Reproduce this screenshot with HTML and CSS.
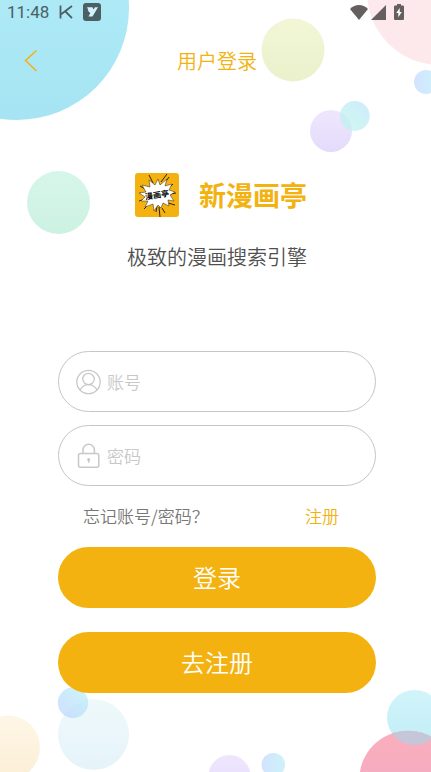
FILE: index.html
```html
<!DOCTYPE html>
<html lang="zh-CN">
<head>
<meta charset="utf-8">
<meta name="viewport" content="width=device-width, initial-scale=1">
<title>用户登录</title>
<link rel="stylesheet" href="styles.css">
</head>
<body>
<svg class="bubbles bubbles-top" viewBox="0 0 431 240" aria-hidden="true">
  <defs>
    <linearGradient id="sky" x2="0" y2="1"><stop stop-color="#b2eef8"/><stop offset="1" stop-color="#a7e4f3"/></linearGradient>
    <linearGradient id="lime" x2="0" y2="1"><stop stop-color="#f2f6d6"/><stop offset="1" stop-color="#eaf1cc"/></linearGradient>
    <linearGradient id="lilac" x2="0" y2="1"><stop stop-color="#efe6fd"/><stop offset="1" stop-color="#e4dbfc"/></linearGradient>
    <linearGradient id="mint" x2="0" y2="1"><stop stop-color="#d7f6eb"/><stop offset="1" stop-color="#ccf1e2"/></linearGradient>
    <linearGradient id="aqua" x1="0" y1="1" x2="1" y2="0"><stop stop-color="#bdf7ea"/><stop offset="1" stop-color="#b8e2fa"/></linearGradient>
    <linearGradient id="azure" x1="0" y1="0" x2="1" y2="0"><stop stop-color="#d2e3ff"/><stop offset="1" stop-color="#cdf2f9"/></linearGradient>
  </defs>
  <circle cx="17" cy="8" r="112" fill="url(#sky)"/>
  <circle cx="293" cy="50" r="31.5" fill="url(#lime)"/>
  <circle cx="440" cy="-8" r="73" fill="#fde9eb"/>
  <circle cx="426" cy="82" r="12" fill="url(#azure)"/>
  <circle cx="331" cy="131" r="21" fill="url(#lilac)"/>
  <circle cx="354.7" cy="116" r="15" fill="url(#aqua)" opacity=".7"/>
  <circle cx="58.5" cy="202.5" r="31.5" fill="url(#mint)"/>
</svg>
<svg class="bubbles bubbles-bottom" viewBox="0 0 431 92" aria-hidden="true">
  <defs>
    <linearGradient id="mist" x2="0" y2="1"><stop stop-color="#eff9fa"/><stop offset="1" stop-color="#e5f3fa"/></linearGradient>
    <linearGradient id="cream" x2="0" y2="1"><stop stop-color="#fef6e6"/><stop offset="1" stop-color="#fbeed6"/></linearGradient>
    <linearGradient id="rose" x2="0" y2="1"><stop stop-color="#f9afbc"/><stop offset="1" stop-color="#f3a8c6"/></linearGradient>
    <linearGradient id="ice" x2="0" y2="1"><stop stop-color="#d1f4fa"/><stop offset="1" stop-color="#c2edf6"/></linearGradient>
    <linearGradient id="drop" x1="0" y1="1" x2="1" y2="0"><stop stop-color="#bcd0ff"/><stop offset="1" stop-color="#b4f2f6"/></linearGradient>
  </defs>
  <circle cx="93.5" cy="54.5" r="35.5" fill="url(#mist)"/>
  <circle cx="73" cy="22.7" r="15.2" fill="url(#drop)" opacity=".7"/>
  <circle cx="8" cy="67.5" r="32" fill="url(#cream)"/>
  <circle cx="229.5" cy="96" r="21" fill="url(#lilac)"/>
  <circle cx="273.3" cy="84.7" r="11.8" fill="url(#azure)"/>
  <circle cx="414.5" cy="37.5" r="27.5" fill="url(#ice)"/>
  <circle cx="408" cy="99.5" r="48.7" fill="url(#rose)"/>
  <clipPath id="overlap"><circle cx="408" cy="99.5" r="48.7"/></clipPath>
  <circle cx="414.5" cy="37.5" r="27.5" fill="#c5c7d9" clip-path="url(#overlap)"/>
</svg>

<div class="status">
  <div class="status-group">
    <span class="clock">11:48</span>
    <svg width="14" height="14" viewBox="0 0 14 14" fill="none" stroke="currentColor" stroke-width="1.800" aria-hidden="true"><path d="M1.500 .5v13M13 1 1.800 9.500M6.500 6.500 13 13.200"/></svg>
    <svg width="18" height="18" viewBox="0 0 18 18" aria-hidden="true"><rect width="18" height="18" rx="3" fill="currentColor"/><path d="M4 4.300h5.500L10.500 6.500l1.500-2.200h3L9.500 13.500H5.500L7.300 10 4.500 7.500h1z" fill="#d4f3f8"/></svg>
  </div>
  <div class="status-group status-right">
    <svg width="18" height="15" viewBox="0 0 18 15" aria-hidden="true"><path d="M0 4C5-1.200 13-1.200 18 4L9 15z" fill="currentColor"/></svg>
    <svg width="15" height="15" viewBox="0 0 15 15" aria-hidden="true"><path d="M15 0v15H0z" fill="currentColor"/></svg>
    <svg class="battery" width="10" height="16" viewBox="0 0 10 16" aria-hidden="true"><path d="M3 0h4v1.500h2q1 0 1 1V15q0 1-1 1H1q-1 0-1-1V2.500q0-1 1-1h2z" fill="currentColor"/><path d="M5.700 4 2.200 9h2.100v4.300L7.800 8H5.700z" fill="#fff"/></svg>
  </div>
</div>

<header class="nav">
  <button class="back" type="button" aria-label="返回">
    <svg width="14" height="22" viewBox="0 0 14 22" fill="none" stroke="currentColor" stroke-width="1.500" aria-hidden="true"><path d="M12.500 .5 1.500 10.500 12.500 21"/></svg>
  </button>
  <h1 class="title">用户登录</h1>
</header>

<main class="page">
  <div class="brand">
    <svg class="logo" width="44" height="44" viewBox="0 0 44 44" aria-hidden="true">
      <rect width="44" height="44" rx="3" fill="#f3b210"/>
      <path stroke="#30230c" fill="none" d="M14 2l4 8M26 9l6-8M29 11l5-7M5 13l7 4M38 11l-5 5M4 28l6-2M9 36l5-5M33 30l7 2M27 35l3 5M22 33l-1 6M24 34l1 10M5 20l5 2M36 21l5-1"/>
      <path d="M14 7 20 12 23 6 25 12 32 6 30 13 37 11 34 17 40 19 35 22 39 28 33 27 34 33 28 30 26 35 23 32 19 38 18 31 10 34 13 28 6 28 10 24 4 20 11 19 7 12 15 14z" fill="#fff" stroke="#2c2417" stroke-width=".5"/>
      <text class="logo-text" x="10" y="25" transform="rotate(-9 22 22)">漫画亭</text>
    </svg>
    <h2 class="name">新漫画亭</h2>
  </div>
  <p class="slogan">极致的漫画搜索引擎</p>

  <form class="form">
    <label class="field">
      <svg width="26" height="26" viewBox="0 0 26 26" fill="none" stroke="currentColor" stroke-width="1.300" aria-hidden="true"><circle cx="13.500" cy="13" r="11.700"/><circle cx="13.500" cy="10" r="5.700"/><path d="M5 21c2-3.500 5-5.300 8.500-5.300s6.500 1.800 8.500 5.300"/></svg>
      <input class="input" type="text" placeholder="账号" aria-label="账号">
    </label>
    <label class="field">
      <svg width="26" height="26" viewBox="0 0 26 26" fill="none" stroke="currentColor" stroke-width="1.500" aria-hidden="true"><rect x="3.500" y="10.500" width="20.300" height="13.700" rx="2"/><path d="M8 10.500V7a5.700 5.700 0 0 1 11.400 0v3.500"/><circle cx="13.700" cy="16.500" r="1.500" fill="currentColor" stroke="none"/><path d="M13.700 16.500v3.200"/></svg>
      <input class="input" type="password" placeholder="密码" aria-label="密码">
    </label>
    <div class="links">
      <a class="forgot" href="#forgot">忘记账号/密码？</a>
      <a class="register" href="#register">注册</a>
    </div>
    <button class="button" type="submit">登录</button>
    <button class="button" type="button">去注册</button>
  </form>
</main>
</body>
</html>
```
FILE: styles.css
```css
* {
  box-sizing: border-box;
}

body {
  position: relative;
  min-height: 100vh;
  margin: 0;
  overflow-x: hidden;
  background: #fff;
  color: #505050;
  font-family: "Noto Sans CJK SC", sans-serif;
  font-weight: 350;
}

svg {
  display: block;
  flex: none;
}

.bubbles {
  position: absolute;
  left: 0;
  z-index: -1;
  width: 100%;
}

.bubbles-top {
  top: 0;
}

.bubbles-bottom {
  bottom: 0;
}

.status {
  display: flex;
  justify-content: space-between;
  height: 24px;
  padding: 0 27px 0 7px;
  color: #4a6064;
}

.status-group {
  display: flex;
  align-items: center;
  gap: 10px;
}

.status-right {
  gap: 3px;
  color: #665f60;
}

.battery {
  margin-left: 5px;
}

.clock {
  font: 17px/24px Roboto, sans-serif;
}

.nav {
  display: grid;
  grid-template-columns: 46px 1fr 43px;
  align-items: center;
  height: 73px;
  color: #f3b210;
}

.back {
  display: flex;
  justify-content: flex-end;
  padding: 8px;
  border: 0;
  background: none;
  color: inherit;
}

.title {
  margin: 0;
  font-size: 20px;
  font-weight: 350;
  line-height: 28px;
  text-align: center;
}

.page {
  padding: 76px 55px 0 58px;
}

.brand {
  display: flex;
  align-items: center;
  justify-content: center;
  gap: 20px;
  height: 44px;
  padding-left: 8px;
}

.logo-text {
  font-size: 8px;
  font-weight: 700;
}

.name {
  margin: 0;
  color: #f3b210;
  font-size: 27px;
  font-weight: 700;
  line-height: 40px;
}

.slogan {
  margin: 26px 0 80px;
  font-size: 20px;
  line-height: 28px;
  text-align: center;
}

.form {
  display: flex;
  flex-direction: column;
}

.field {
  display: flex;
  align-items: center;
  gap: 6px;
  height: 61px;
  margin-bottom: 13px;
  padding: 0 16px;
  border: 1px solid #c6c6c6;
  border-radius: 31px;
  color: #c8c8c8;
}

.input {
  flex: 1;
  min-width: 0;
  padding: 0;
  border: 0;
  outline: 0;
  background: none;
  color: #555;
  font: inherit;
  font-size: 17px;
}

.input::placeholder {
  color: #c8c8c8;
  opacity: 1;
}

.links {
  display: flex;
  justify-content: space-between;
  margin: 2px 0 16px;
  padding: 0 37px 0 25px;
  font-size: 17px;
  line-height: 30px;
}

.links a {
  text-decoration: none;
}

.forgot {
  color: #777;
}

.register {
  color: #f3b210;
}

.button {
  height: 61px;
  margin: 0 0 24px;
  padding: 0 0 2px;
  border: 0;
  border-radius: 31px;
  background: #f3b210;
  color: #fff;
  font: inherit;
  font-size: 24px;
}
```
